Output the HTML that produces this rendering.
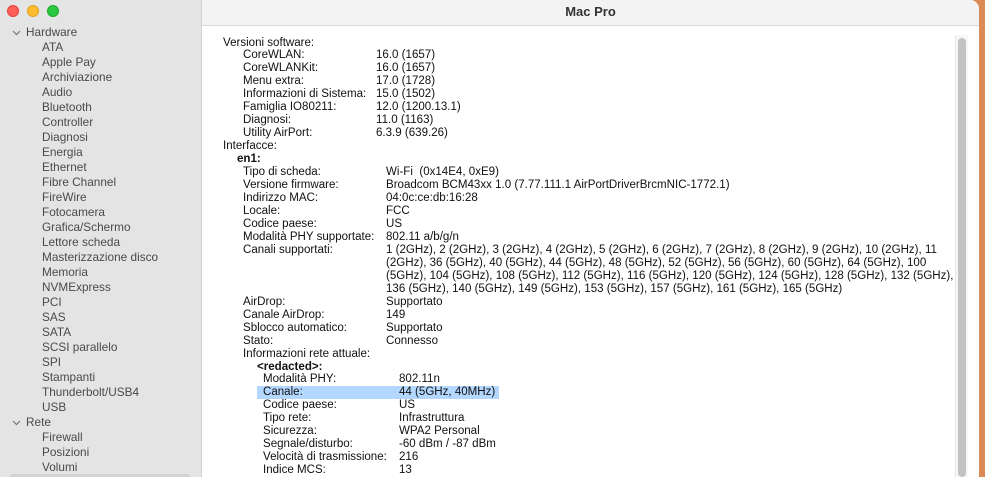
<!DOCTYPE html>
<html><head><meta charset="utf-8"><style>
*{margin:0;padding:0;box-sizing:border-box}
body{width:985px;height:477px;overflow:hidden;background:#d98a55;font-family:"Liberation Sans",sans-serif;font-size:11.55px;position:relative}
#win{position:absolute;left:0;top:0;width:979px;height:477px;background:#fff;border-top-right-radius:9px;overflow:hidden}
#side{position:absolute;left:0;top:0;width:202px;height:477px;background:#e4e4e4;border-right:1px solid #d0d0d0}
#title{position:absolute;left:202px;top:0;right:0;height:26px;background:#f3f3f3;border-bottom:1px solid #d8d8d8;text-align:center;font-weight:bold;font-size:13px;line-height:24px;color:#333}
.d{position:absolute;top:5px;width:12px;height:12px;border-radius:50%}
.s{position:absolute;white-space:nowrap;color:#4a4a4a;line-height:15px;font-size:11.8px}
.r{position:absolute;white-space:nowrap;color:#111;line-height:13px}
#sb{position:absolute;left:955px;top:35px;width:13px;height:442px;background:#f7f7f7;border-left:1px solid #e6e6e6}
#th{position:absolute;left:958px;top:38px;width:8px;height:439px;background:#c2c2c2;border-radius:4px}
</style></head><body>
<div id="win">
<div id="side">
<div class="d" style="left:7px;background:#fe5f57;border:1px solid #e0443e"></div>
<div class="d" style="left:27px;background:#febc2e;border:1px solid #dea123"></div>
<div class="d" style="left:47px;background:#28c840;border:1px solid #1aab29"></div>
<div style="position:absolute;left:10px;top:474px;width:180px;height:6px;background:#d2d2d2;border-radius:3px"></div>
</div>
<div id="title">Mac Pro</div>
<div id="sb"></div><div id="th"></div>
</div>
<div id="c"></div>
<script>
var s=["Hardware","ATA","Apple Pay","Archiviazione","Audio","Bluetooth","Controller","Diagnosi","Energia","Ethernet","Fibre Channel","FireWire","Fotocamera","Grafica/Schermo","Lettore scheda","Masterizzazione disco","Memoria","NVMExpress","PCI","SAS","SATA","SCSI parallelo","SPI","Stampanti","Thunderbolt/USB4","USB","Rete","Firewall","Posizioni","Volumi"];
var h="";
s.forEach(function(t,i){var top=32.5+i*15-7.5;var top0=(i==0||i==26);
h+='<div class="s" style="left:'+(top0?26:42)+'px;top:'+top+'px">'+t+'</div>';
if(top0)h+='<svg style="position:absolute;left:12px;top:'+(top+5)+'px" width="9" height="6"><path d="M1 1L4.5 4.5L8 1" stroke="#777" stroke-width="1.2" fill="none"/></svg>';});
var r=[[223,"Versioni software:"],[243,"CoreWLAN:",376,"16.0 (1657)"],[243,"CoreWLANKit:",376,"16.0 (1657)"],[243,"Menu extra:",376,"17.0 (1728)"],[243,"Informazioni di Sistema:",376,"15.0 (1502)"],[243,"Famiglia IO80211:",376,"12.0 (1200.13.1)"],[243,"Diagnosi:",376,"11.0 (1163)"],[243,"Utility AirPort:",376,"6.3.9 (639.26)"],[223,"Interfacce:"],[237,"<b>en1:</b>"],
[243,"Tipo di scheda:",386,"Wi-Fi&nbsp; (0x14E4, 0xE9)"],[243,"Versione firmware:",386,"Broadcom BCM43xx 1.0 (7.77.111.1 AirPortDriverBrcmNIC-1772.1)"],[243,"Indirizzo MAC:",386,"04:0c:ce:db:16:28"],[243,"Locale:",386,"FCC"],[243,"Codice paese:",386,"US"],[243,"Modalità PHY supportate:",386,"802.11 a/b/g/n"],
[243,"Canali supportati:",386,"1 (2GHz), 2 (2GHz), 3 (2GHz), 4 (2GHz), 5 (2GHz), 6 (2GHz), 7 (2GHz), 8 (2GHz), 9 (2GHz), 10 (2GHz), 11"],
[0,"",386,"(2GHz), 36 (5GHz), 40 (5GHz), 44 (5GHz), 48 (5GHz), 52 (5GHz), 56 (5GHz), 60 (5GHz), 64 (5GHz), 100"],
[0,"",386,"(5GHz), 104 (5GHz), 108 (5GHz), 112 (5GHz), 116 (5GHz), 120 (5GHz), 124 (5GHz), 128 (5GHz), 132 (5GHz),"],
[0,"",386,"136 (5GHz), 140 (5GHz), 149 (5GHz), 153 (5GHz), 157 (5GHz), 161 (5GHz), 165 (5GHz)"],
[243,"AirDrop:",386,"Supportato"],[243,"Canale AirDrop:",386,"149"],[243,"Sblocco automatico:",386,"Supportato"],[243,"Stato:",386,"Connesso"],[243,"Informazioni rete attuale:"],[257,"<b>&lt;redacted&gt;:</b>"],
[263,"Modalità PHY:",399,"802.11n"],[263,"Canale:",399,"44 (5GHz, 40MHz)"],[263,"Codice paese:",399,"US"],[263,"Tipo rete:",399,"Infrastruttura"],[263,"Sicurezza:",399,"WPA2 Personal"],[263,"Segnale/disturbo:",399,"-60 dBm / -87 dBm"],[263,"Velocità di trasmissione:",399,"216"],[263,"Indice MCS:",399,"13"]];
r.forEach(function(x,i){var top=43+i*12.96-6.5;
if(i==27)h+='<div style="position:absolute;left:257px;top:'+(top-0.5)+'px;width:242px;height:13px;background:#b3d7ff"></div>';
if(x[1])h+='<div class="r" style="left:'+x[0]+'px;top:'+top+'px">'+x[1]+'</div>';
if(x[3])h+='<div class="r" style="left:'+x[2]+'px;top:'+top+'px">'+x[3]+'</div>';});
document.getElementById("c").innerHTML=h;
</script>
</body></html>
